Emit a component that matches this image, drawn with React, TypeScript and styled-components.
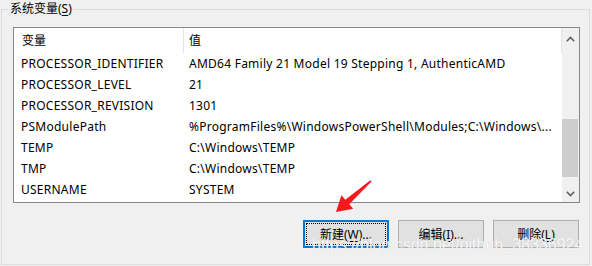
import React from 'react';
import styled, { createGlobalStyle } from 'styled-components';

const Global = createGlobalStyle`
  html, body { margin: 0; padding: 0; background: #f0f0f0; }
  body {
    width: 592px; height: 266px; overflow: hidden;
    font-family: "Noto Sans", "Noto Sans CJK SC", sans-serif;
    font-size: 12px; color: #000;
  }
`;

const Page = styled.div`
  position: relative;
  width: 592px;
  height: 266px;
  box-sizing: border-box;
  padding: 9px 2px 0 1px;
`;

const Group = styled.section`
  position: relative;
  height: 256px;
  box-sizing: border-box;
  border: 1px solid #dcdcdc;
  padding: 17px 9px 0 11px;
  display: flex;
  flex-direction: column;
`;

const Legend = styled.div`
  position: absolute;
  top: -10px;
  left: 7px;
  padding: 0 1px;
  background: #f0f0f0;
  line-height: 18px;
`;

const Key = styled.span`
  text-decoration: underline;
  text-underline-offset: 2px;
`;

const ListBox = styled.div`
  height: 176px;
  box-sizing: border-box;
  border: 1px solid #828790;
  background: #fff;
  display: grid;
  grid-template-columns: 1fr 17px;
`;

const Content = styled.div`
  display: flex;
  flex-direction: column;
  overflow: hidden;
`;

const Header = styled.div`
  display: grid;
  grid-template-columns: 170px 1fr;
  height: 25px;
`;

const HeaderCell = styled.div<{ $first?: boolean }>`
  border-right: 1px solid #e5e5e5;
  padding-left: ${p => (p.$first ? 8 : 5)}px;
  line-height: 25px;
`;

const Row = styled.div`
  display: grid;
  grid-template-columns: 170px 1fr;
  height: 21px;
  line-height: 21px;
`;

const Cell = styled.div<{ $first?: boolean }>`
  padding-left: ${p => (p.$first ? 7 : 5)}px;
  white-space: nowrap;
  overflow: hidden;
  letter-spacing: 0.25px;
`;

const ScrollBar = styled.div`
  background: #f0f0f0;
  display: flex;
  flex-direction: column;
`;

const ScrollBtn = styled.div<{ $h: number }>`
  height: ${p => p.$h}px;
  display: flex;
  align-items: center;
  justify-content: center;
`;

const Track = styled.div`
  flex: 1;
  padding: 70px 1px 0 0;
`;

const Thumb = styled.div`
  height: 58px;
  background: #cdcdcd;
`;

const Buttons = styled.div`
  display: flex;
  justify-content: flex-end;
  gap: 9px;
  margin: 17px 1px 0 0;
`;

const Btn = styled.div<{ $focus?: boolean }>`
  position: relative;
  width: 86px;
  height: 28px;
  box-sizing: border-box;
  background: #e1e1e1;
  border: ${p => (p.$focus ? '2px solid #0078d7' : '1px solid #adadad')};
  display: flex;
  align-items: center;
  justify-content: center;
  font-size: 12px;
  ${p =>
    p.$focus
      ? `&::after { content: ''; position: absolute; inset: 1px; border: 1px dotted #000; }`
      : ''}
`;

const Watermark = styled.div`
  position: absolute;
  left: 312px;
  top: 236px;
  font-family: "Liberation Sans", Arial, sans-serif;
  font-size: 16px;
  line-height: 18px;
  color: rgba(255, 255, 255, 0.9);
  text-shadow: 0 0 1px rgba(150, 150, 150, 0.45);
  white-space: nowrap;
  pointer-events: none;
`;

const ArrowSvg = styled.svg`
  position: absolute;
  left: 0;
  top: 0;
  pointer-events: none;
`;

const Chevron = ({ up }: { up?: boolean }) => (
  <svg width="9" height="6" viewBox="0 0 9 6">
    <path
      d={up ? 'M0.8 5.2 L4.5 1.5 L8.2 5.2' : 'M0.8 0.8 L4.5 4.5 L8.2 0.8'}
      fill="none"
      stroke="#606060"
      strokeWidth="1.6"
    />
  </svg>
);

const rows: [string, string][] = [
  ['PROCESSOR_IDENTIFIER', 'AMD64 Family 21 Model 19 Stepping 1, AuthenticAMD'],
  ['PROCESSOR_LEVEL', '21'],
  ['PROCESSOR_REVISION', '1301'],
  ['PSModulePath', '%ProgramFiles%\\WindowsPowerShell\\Modules;C:\\Windows\\...'],
  ['TEMP', 'C:\\Windows\\TEMP'],
  ['TMP', 'C:\\Windows\\TEMP'],
  ['USERNAME', 'SYSTEM'],
];

export default function App() {
  return (
    <Page>
      <Global />
      <Group>
        <Legend>
          系统变量(<Key>S</Key>)
        </Legend>
        <ListBox>
          <Content>
            <Header>
              <HeaderCell $first>变量</HeaderCell>
              <HeaderCell>值</HeaderCell>
            </Header>
            {rows.map(([k, v]) => (
              <Row key={k}>
                <Cell $first>{k}</Cell>
                <Cell>{v}</Cell>
              </Row>
            ))}
          </Content>
          <ScrollBar>
            <ScrollBtn $h={21}>
              <Chevron up />
            </ScrollBtn>
            <Track>
              <Thumb />
            </Track>
            <ScrollBtn $h={17}>
              <Chevron />
            </ScrollBtn>
          </ScrollBar>
        </ListBox>
        <Buttons>
          <Btn $focus>
            新建(<Key>W</Key>)...
          </Btn>
          <Btn>
            编辑(<Key>I</Key>)...
          </Btn>
          <Btn>
            删除(<Key>L</Key>)
          </Btn>
        </Buttons>
      </Group>
      <Watermark>https://blog.csdn.net/github_38336924</Watermark>
      <ArrowSvg width="592" height="266" viewBox="0 0 592 266">
        <polygon
          points="371.5,181.6 370.4,180.3 345.3,199.8 341.4,195.2 336,212 353.2,208.8 349.3,204.2"
          fill="#f5191e"
        />
      </ArrowSvg>
    </Page>
  );
}
